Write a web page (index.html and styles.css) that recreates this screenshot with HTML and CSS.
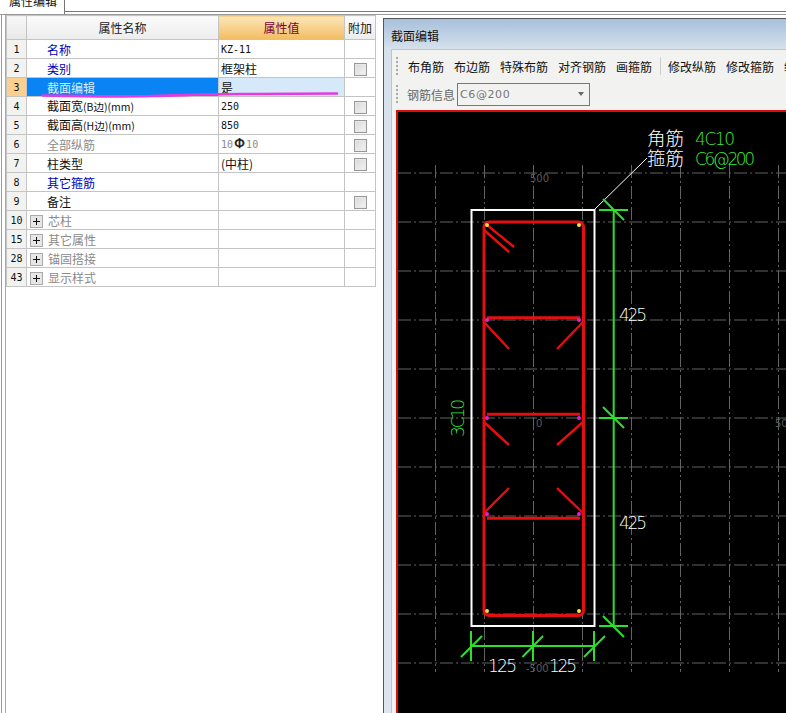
FILE: index.html
```html
<!DOCTYPE html>
<html lang="zh-CN">
<head>
<meta charset="utf-8">
<title>属性编辑</title>
<link rel="stylesheet" href="styles.css">
</head>
<body>
<div class="app">
  <div class="tabstrip">
    <div class="tab"><span class="tab-label">属性编辑</span></div>
    <div class="tab-rest"></div>
  </div>
  <div class="workspace">
    <section class="left">
      <table class="props">
        <colgroup><col class="c-num"><col class="c-name"><col class="c-val"><col class="c-add"></colgroup>
        <thead>
          <tr><th class="num"></th><th>属性名称</th><th class="h-val">属性值</th><th>附加</th></tr>
        </thead>
        <tbody>
          <tr><td class="num">1</td><td class="name blue">名称</td><td class="val latin">KZ-11</td><td></td></tr>
          <tr><td class="num">2</td><td class="name blue">类别</td><td class="val">框架柱</td><td class="add"><span class="check"></span></td></tr>
          <tr class="sel"><td class="num">3</td><td class="name">截面编辑</td><td class="val">是</td><td></td></tr>
          <tr><td class="num">4</td><td class="name">截面宽<span class="unit">(B边)(mm)</span></td><td class="val latin">250</td><td class="add"><span class="check"></span></td></tr>
          <tr><td class="num">5</td><td class="name">截面高<span class="unit">(H边)(mm)</span></td><td class="val latin">850</td><td class="add"><span class="check"></span></td></tr>
          <tr><td class="num">6</td><td class="name grey">全部纵筋</td><td class="val latin grey">10<b class="bar">Φ</b>10</td><td class="add"><span class="check"></span></td></tr>
          <tr><td class="num">7</td><td class="name">柱类型</td><td class="val">(中柱)</td><td class="add"><span class="check"></span></td></tr>
          <tr><td class="num">8</td><td class="name blue">其它箍筋</td><td class="val"></td><td></td></tr>
          <tr><td class="num">9</td><td class="name">备注</td><td class="val"></td><td class="add"><span class="check"></span></td></tr>
          <tr class="group"><td class="num">10</td><td class="name grey"><span class="plus"></span>芯柱</td><td></td><td></td></tr>
          <tr class="group"><td class="num">15</td><td class="name grey"><span class="plus"></span>其它属性</td><td></td><td></td></tr>
          <tr class="group"><td class="num">28</td><td class="name grey"><span class="plus"></span>锚固搭接</td><td></td><td></td></tr>
          <tr class="group"><td class="num">43</td><td class="name grey"><span class="plus"></span>显示样式</td><td></td><td></td></tr>
        </tbody>
      </table>
      <svg class="scribble" viewBox="0 0 300 8" width="300" height="8" aria-hidden="true">
        <path d="M1 5.5 C40 6 80 7 110 6 C150 5 170 4 200 4 L295 3.5" />
      </svg>
    </section>
    <section class="editor">
      <h2 class="editor-title">截面编辑</h2>
      <div class="editor-body">
        <div class="toolbar">
          <span class="grip"></span>
          <span class="tool">布角筋</span>
          <span class="tool">布边筋</span>
          <span class="tool">特殊布筋</span>
          <span class="tool">对齐钢筋</span>
          <span class="tool">画箍筋</span>
          <span class="sep"></span>
          <span class="tool">修改纵筋</span>
          <span class="tool">修改箍筋</span>
          <span class="tool">纵筋</span>
        </div>
        <div class="toolbar second">
          <span class="grip"></span>
          <span class="info-label">钢筋信息</span>
          <div class="combo"><span>C6@200</span><i class="arrow"></i></div>
        </div>
        <div class="canvas">
          <svg class="drawing" viewBox="398 112 388 601" width="388" height="601">
            <g class="grid">
              <path d="M398 173H786M398 222H786M398 271H786M398 320H786M398 369H786M398 418H786M398 467H786M398 516H786M398 565H786M398 614H786M398 663H786"/>
              <path d="M435.5 165V672M484.5 165V672M533.5 165V672M582.5 165V672M631.5 165V672M680.5 165V672M729.5 165V672M778.5 165V672"/>
            </g>
            <g class="axis">
              <text x="530" y="182">500</text>
              <text x="536" y="427">0</text>
              <text x="775" y="427">500</text>
              <text x="526" y="672">-500</text>
            </g>
            <rect class="outline" x="471.5" y="210" width="123" height="416"/>
            <path class="leader" d="M595 209L647 158"/>
            <g class="bars">
              <rect x="484" y="222" width="99.5" height="393.5" rx="5"/>
              <path d="M487 317.7H580M487 414.3H580M487 518.3H580"/>
            </g>
            <g class="hooks">
              <path d="M487 225L514 247M484 230L509 252"/>
              <path d="M484 322L509 349M583 322L557 349"/>
              <path d="M484 422L509 445M583 422L557 445"/>
              <path d="M484 513L509 488M583 513L557 488"/>
            </g>
            <g class="dots-y"><circle cx="487" cy="225" r="2"/><circle cx="579" cy="225" r="2"/><circle cx="487" cy="611" r="2"/><circle cx="579" cy="611" r="2"/></g>
            <g class="dots-m"><circle cx="487" cy="320" r="2"/><circle cx="579" cy="320" r="2"/><circle cx="487" cy="418" r="2"/><circle cx="579" cy="418" r="2"/><circle cx="487" cy="514" r="2"/><circle cx="579" cy="514" r="2"/></g>
            <g class="dim">
              <path d="M613.7 209V627M599 210H628M603 199L624 220M599 418H628M603 407L624 428M599 626H628M603 616L624 637"/>
              <path d="M471 646H594M471 631V661M533 631V661M594 631V661M461 657L482 636M522.5 657L543 636M584 657L605 636"/>
            </g>
            <g class="cjk-label">
              <text x="647" y="145">角筋</text>
              <text x="647" y="165">箍筋</text>
            </g>
            <g class="green-label">
              <text x="695" y="145" textLength="40">4C10</text>
              <text x="695" y="165" textLength="60">C6@200</text>
              <text transform="translate(464 437) rotate(-90)" textLength="38">3C10</text>
            </g>
            <g class="white-label">
              <text x="619" y="321" textLength="28">425</text>
              <text x="619" y="529" textLength="28">425</text>
              <text x="488" y="672" textLength="29">125</text>
              <text x="549" y="672" textLength="28">125</text>
            </g>
          </svg>
        </div>
      </div>
    </section>
  </div>
</div>
</body>
</html>
```
FILE: styles.css
```css
* { box-sizing: border-box; }
html, body { margin: 0; padding: 0; background: #fff; overflow: hidden; }
body { font-family: "Noto Sans CJK SC", "Liberation Sans", sans-serif; color: #111; }

.app { width: 786px; height: 713px; overflow: hidden; display: flex; flex-direction: column; }

.tabstrip { height: 15px; display: flex; flex: none; border-bottom: 1px solid #999; }
.tab { width: 65px; height: 14px; overflow: hidden; border-right: 1px solid #777; padding-left: 9px; }
.tab-label { display: block; margin-top: -8px; font-size: 12px; line-height: 18px; }
.tab-rest { flex: 1; height: 12px; border-bottom: 1px solid #777; }

.workspace { flex: 1; min-height: 0; display: flex; gap: 6px; padding-left: 1px; }

.left { position: relative; width: 376px; flex: none; border-left: 1px solid #999; padding-left: 3px; }
.left::before { content: ""; position: absolute; left: 3px; top: 0; bottom: 0; width: 1px; background: #aaa; }

.props { table-layout: fixed; border-collapse: collapse; width: 369px; margin: 0 0 0 1px; font-size: 12px; }
.c-num { width: 20px; }
.c-name { width: 192px; }
.c-val { width: 126px; }
.c-add { width: 31px; }

.props th, .props td { border: 1px solid #c4c4c4; padding: 0; height: 19px; line-height: 17px; overflow: hidden; white-space: nowrap; }
.props th { height: 24px; font-weight: 400; font-size: 12px; color: #222; background: linear-gradient(#fbfbfb, #ececec); }
.props th.h-val { color: #7a0038; background: linear-gradient(#fde6bb, #f2bc60); }

.props td.num { text-align: center; font-family: "DejaVu Sans Mono", monospace; font-size: 10px; background: #f2f2f0; color: #111; }
.props th.num { background: linear-gradient(#f8f8f8, #e8e8e8); }
.name { padding-left: 20px !important; }
.unit { font-size: 10.5px; }
.val { padding-left: 2px !important; }
.latin { font-family: "DejaVu Sans Mono", monospace; font-size: 10px; }
.blue { color: #0000b8; }
.grey { color: #8a8a8a; }
.bar { color: #222; font-family: "Noto Sans CJK SC", sans-serif; font-size: 13px; line-height: 1px; font-weight: 700; margin: 0 1px; }
.add { text-align: center; }

.sel td.num { background: #fbd08e; }
.sel td.name { background: #0a84f5; color: #d8ecff; }
.sel td.val { background: #d6e9fb; }

.check { display: inline-block; width: 13px; height: 13px; vertical-align: middle; margin-top: -1px; border: 1px solid #999; background: linear-gradient(135deg, #d8d8d8, #f4f4f4); box-shadow: inset 0 0 0 1px #e8e8e8; }

.group .name { padding-left: 3px !important; }
.plus { display: inline-block; position: relative; width: 13px; height: 13px; margin-right: 5px; vertical-align: middle; margin-top: -2px; border: 1px solid #aaa; background: #e6e6e6; }
.plus::before { content: ""; position: absolute; left: 2px; right: 2px; top: 5px; height: 1px; background: #111; }
.plus::after { content: ""; position: absolute; top: 2px; bottom: 2px; left: 5px; width: 1px; background: #111; }

.scribble { position: absolute; left: 40px; top: 75px; overflow: visible; }
.scribble path { fill: none; stroke: #e23be0; stroke-width: 2.6; stroke-linecap: round; }

.editor { flex: 1; min-width: 0; margin-top: 3px; border: 1px solid #555; border-right: 0; border-bottom: 0; background: linear-gradient(#a7c0db, #d6e1ec 30px, #dde5ee); padding-left: 7px; display: flex; flex-direction: column; }
.editor-title { margin: 0; height: 30px; flex: none; font-size: 12px; font-weight: 400; line-height: 33px; color: #111; }
.editor-body { flex: 1; min-height: 0; background: #f2f2f0; border: 1px solid #c0c4c8; border-right: 0; border-bottom: 0; padding-left: 4px; display: flex; flex-direction: column; }

.toolbar { flex: none; height: 30px; display: flex; align-items: center; gap: 10px; font-size: 12px; white-space: nowrap; overflow: hidden; padding-top: 2px; }
.toolbar.second { height: 28px; gap: 0; padding-top: 0; }
.grip { width: 2px; height: 18px; flex: none; margin-right: 0; background: repeating-linear-gradient(#aaa 0 2px, transparent 2px 4px); }
.toolbar.second .grip { margin-right: 1px; }
.sep { width: 1px; height: 18px; flex: none; background: #ccc; margin: 0 -2.5px; }
.tool { flex: none; }
.info-label { color: #666; margin-left: 8px; margin-right: 2px; }
.combo { width: 133px; height: 23px; border: 1px solid #777; background: #f2f2f0; display: flex; align-items: center; justify-content: space-between; padding: 0 5px 0 2px; font-family: "DejaVu Sans", sans-serif; font-size: 11px; color: #777; letter-spacing: .6px; }
.arrow { width: 0; height: 0; border: 3px solid transparent; border-top: 4px solid #666; border-bottom: 0; }

.canvas { flex: 1; min-height: 0; margin-top: 2px; border: 2px solid #d80e0e; border-right: 0; border-bottom: 0; background: #000; overflow: hidden; }
.drawing { display: block; }

.grid path { fill: none; stroke: #626262; stroke-width: 1; stroke-dasharray: 13 3 2 3; }
.axis text { font-family: "DejaVu Sans", sans-serif; font-size: 10px; fill: #5c5c5c; }
.outline { fill: none; stroke: #fff; stroke-width: 2; }
.leader { fill: none; stroke: #fff; stroke-width: 1; }
.bars rect, .bars path { fill: none; stroke: #e40f0f; stroke-width: 3; }
.hooks path { fill: none; stroke: #e40f0f; stroke-width: 2.4; }
.dots-y circle { fill: #f5e34a; }
.dots-m circle { fill: #e020d8; }
.dim path { fill: none; stroke: #2be02b; stroke-width: 2; }
.cjk-label text { font-family: "Noto Sans CJK SC", sans-serif; font-size: 18.5px; fill: #fff; font-weight: 300; }
.green-label text { font-family: "DejaVu Sans", sans-serif; font-weight: 200; font-size: 17px; fill: #3ce83c; }
.white-label text { font-family: "DejaVu Sans", sans-serif; font-weight: 200; font-size: 17px; fill: #fff; }
```
